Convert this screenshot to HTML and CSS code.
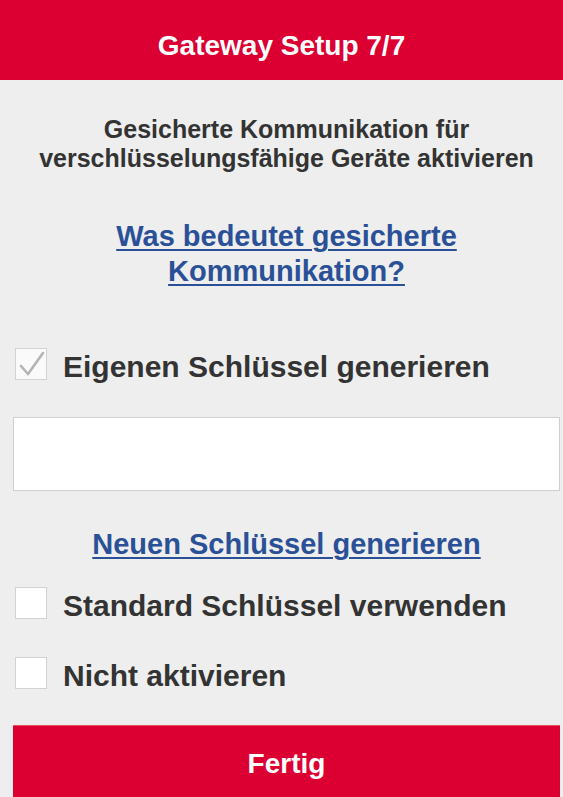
FILE: index.html
```html
<!DOCTYPE html>
<html lang="de">
<head>
<meta charset="utf-8">
<title>Gateway Setup 7/7</title>
<link rel="stylesheet" href="styles.css">
</head>
<body>
<header class="topbar">
  <h1 class="topbar-title">Gateway Setup 7/7</h1>
</header>
<main class="content">
  <p class="intro">Gesicherte Kommunikation für<br>verschlüsselungsfähige Geräte aktivieren</p>
  <p class="help"><a class="link" href="#">Was bedeutet gesicherte<br>Kommunikation?</a></p>

  <label class="option option-first">
    <span class="box box-checked">
      <svg class="tick" viewBox="0 0 32 32" width="32" height="32"><polyline points="6,18 13,26 28,5" fill="none" stroke="#b4b4b4" stroke-width="2.6" stroke-linecap="round" stroke-linejoin="round"/></svg>
    </span>
    <span class="option-label">Eigenen Schlüssel generieren</span>
  </label>

  <div class="key-field"></div>

  <p class="generate"><a class="link" href="#">Neuen Schlüssel generieren</a></p>

  <label class="option option-second">
    <span class="box"></span>
    <span class="option-label">Standard Schlüssel verwenden</span>
  </label>

  <label class="option option-third">
    <span class="box"></span>
    <span class="option-label">Nicht aktivieren</span>
  </label>

  <button class="done" type="button">Fertig</button>
</main>
</body>
</html>
```

FILE: styles.css
```css
* { box-sizing: border-box; }
html, body { margin: 0; padding: 0; }
body {
  background: #eeeeee;
  font-family: "Liberation Sans", Arial, Helvetica, sans-serif;
  color: #333333;
  overflow: hidden;
}
.topbar {
  height: 80px;
  background: #dc0032;
  padding-top: 30px;
}
.topbar-title {
  margin: 0;
  text-align: center;
  color: #ffffff;
  font-size: 28px;
  line-height: 32px;
  font-weight: bold;
}
.content {
  padding: 35px 3px 0 13px;
  display: flex;
  flex-direction: column;
}
.intro {
  margin: 0;
  text-align: center;
  font-size: 25px;
  line-height: 29px;
  font-weight: bold;
  color: #333333;
}
.help {
  margin: 46px 0 0;
  text-align: center;
  font-size: 29px;
  line-height: 35px;
  font-weight: bold;
}
.link {
  color: #2a5197;
  text-decoration: underline;
  text-decoration-thickness: 2px;
  text-underline-offset: 3px;
}
.option {
  display: flex;
  align-items: center;
  gap: 16px;
  padding-left: 2px;
  height: 32px;
}
.option-first { margin-top: 59px; }
.option-second { margin-top: 25px; }
.option-third { margin-top: 38px; }
.box {
  width: 32px;
  height: 32px;
  flex: none;
  background: #ffffff;
  border: 1px solid #d2d2d2;
  display: flex;
}
.box-checked { background: #fafafa; }
.tick { display: block; margin: -1px; }
.option-label {
  font-size: 30px;
  line-height: 29px;
  font-weight: bold;
  color: #333333;
  padding-top: 4px;
}
.key-field {
  margin-top: 37px;
  height: 74px;
  background: #ffffff;
  border: 1px solid #cfcfcf;
}
.generate {
  margin: 36px 0 0;
  text-align: center;
  font-size: 29px;
  line-height: 35px;
  font-weight: bold;
}
.done {
  margin-top: 36px;
  height: 76px;
  border: none;
  border-top: 1px solid #e4505f;
  background: #dc0032;
  color: #ffffff;
  font-family: "Liberation Sans", Arial, Helvetica, sans-serif;
  font-size: 28px;
  font-weight: bold;
  line-height: 32px;
  padding: 0;
}
```
